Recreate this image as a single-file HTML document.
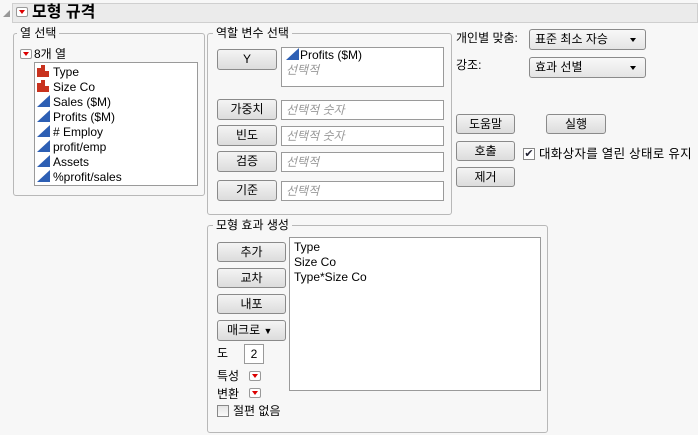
<!DOCTYPE html>
<html><head><meta charset="utf-8"><style>
*{box-sizing:border-box;margin:0;padding:0}
body{width:698px;height:435px;background:#f7f7f7;font-family:"Liberation Sans","Noto Sans CJK KR","NanumGothic",sans-serif;font-size:12px;color:#000;position:relative;overflow:hidden}
.a{position:absolute}
.grp{position:absolute;border:1px solid #b8b8b8;border-radius:3px}
.lbl{position:absolute;background:#f7f7f7;padding:0 3px;font-size:12px;line-height:14px}
.btn{position:absolute;border:1px solid #8a8a8a;border-radius:3px;background:linear-gradient(#f4f4f4,#dcdcdc);text-align:center;font-size:12px;line-height:18px}
.box{position:absolute;background:#fff;border:1px solid #9a9a9a}
.ph{color:#999;font-style:italic;padding-left:4px;line-height:18px}
.rb{position:absolute;width:12px;height:10px;border:1px solid #999;border-radius:2px;background:#fff}
.rb:after{content:"";position:absolute;left:2px;top:2px;border-left:3px solid transparent;border-right:3px solid transparent;border-top:4px solid #d00}
.it{height:15px;line-height:15px;padding-left:2px;white-space:nowrap}
.ic{display:inline-block;width:13px;height:12px;vertical-align:-1px;margin-right:3px}
.dd{position:absolute;border:1px solid #8a8a8a;border-radius:3px;background:linear-gradient(#f8f8f8,#e4e4e4);line-height:18px;padding-left:5px;font-size:12px}
.dd:after{content:"";position:absolute;right:9px;top:8px;border-left:3px solid transparent;border-right:3px solid transparent;border-top:4px solid #000}
</style></head><body>
<div class="a" style="left:3px;top:10px;width:0;height:0;border-left:7px solid transparent;border-bottom:7px solid #999"></div>
<div class="a" style="left:12px;top:3px;width:686px;height:20px;background:#ebebeb;border:1px solid #cfcfcf"></div>
<div class="rb" style="left:16px;top:7px"></div>
<div class="a" style="left:32px;top:3px;font-size:16px;font-weight:bold;line-height:19px">모형 규격</div>

<div class="grp" style="left:13px;top:33px;width:192px;height:163px"></div>
<div class="lbl" style="left:17px;top:26px">열 선택</div>
<div class="rb" style="left:20px;top:49px"></div>
<div class="a" style="left:34px;top:47px;line-height:14px">8개 열</div>
<div class="box" style="left:34px;top:62px;width:164px;height:124px;padding-top:2px">
<div class="it"><svg class="ic" viewBox="0 0 13 12"><path d="M0 3h4v9H0zM4 0h4v12H4zM8 6h4v6H8z" fill="#c8321e"/></svg>Type</div>
<div class="it"><svg class="ic" viewBox="0 0 13 12"><path d="M0 3h4v9H0zM4 0h4v12H4zM8 6h4v6H8z" fill="#c8321e"/></svg>Size Co</div>
<div class="it"><svg class="ic" viewBox="0 0 13 12"><path d="M0 12L13 0v12z" fill="#2d5fb4"/></svg>Sales ($M)</div>
<div class="it"><svg class="ic" viewBox="0 0 13 12"><path d="M0 12L13 0v12z" fill="#2d5fb4"/></svg>Profits ($M)</div>
<div class="it"><svg class="ic" viewBox="0 0 13 12"><path d="M0 12L13 0v12z" fill="#2d5fb4"/></svg># Employ</div>
<div class="it"><svg class="ic" viewBox="0 0 13 12"><path d="M0 12L13 0v12z" fill="#2d5fb4"/></svg>profit/emp</div>
<div class="it"><svg class="ic" viewBox="0 0 13 12"><path d="M0 12L13 0v12z" fill="#2d5fb4"/></svg>Assets</div>
<div class="it"><svg class="ic" viewBox="0 0 13 12"><path d="M0 12L13 0v12z" fill="#2d5fb4"/></svg>%profit/sales</div>
</div>

<div class="grp" style="left:207px;top:33px;width:245px;height:182px"></div>
<div class="lbl" style="left:213px;top:26px">역할 변수 선택</div>
<div class="btn" style="left:217px;top:49px;width:60px;height:21px">Y</div>
<div class="box" style="left:281px;top:47px;width:163px;height:40px">
<div class="it" style="padding-left:4px"><svg class="ic" viewBox="0 0 13 12" style="margin-right:1px"><path d="M0 12L13 0v12z" fill="#2d5fb4"/></svg>Profits ($M)</div>
<div class="ph" style="line-height:14px">선택적</div></div>
<div class="btn" style="left:217px;top:99px;width:60px;height:21px">가중치</div>
<div class="box ph" style="left:281px;top:100px;width:163px;height:20px">선택적 숫자</div>
<div class="btn" style="left:217px;top:125px;width:60px;height:21px">빈도</div>
<div class="box ph" style="left:281px;top:126px;width:163px;height:20px">선택적 숫자</div>
<div class="btn" style="left:217px;top:151px;width:60px;height:21px">검증</div>
<div class="box ph" style="left:281px;top:152px;width:163px;height:20px">선택적</div>
<div class="btn" style="left:217px;top:180px;width:60px;height:21px">기준</div>
<div class="box ph" style="left:281px;top:181px;width:163px;height:20px">선택적</div>

<div class="a" style="left:456px;top:31px;line-height:14px">개인별 맞춤:</div>
<div class="dd" style="left:529px;top:29px;width:117px;height:21px">표준 최소 자승</div>
<div class="a" style="left:456px;top:58px;line-height:14px">강조:</div>
<div class="dd" style="left:529px;top:57px;width:117px;height:21px">효과 선별</div>
<div class="btn" style="left:456px;top:114px;width:59px;height:20px">도움말</div>
<div class="btn" style="left:546px;top:114px;width:60px;height:20px">실행</div>
<div class="btn" style="left:456px;top:141px;width:59px;height:20px">호출</div>
<div class="a" style="left:523px;top:148px;width:12px;height:12px;border:1px solid #888;background:#fff;font-size:11px;line-height:10px;text-align:center;color:#223">✔</div>
<div class="a" style="left:539px;top:146px;line-height:16px;white-space:nowrap;font-size:12.5px;letter-spacing:0.3px">대화상자를 열린 상태로 유지</div>
<div class="btn" style="left:456px;top:167px;width:59px;height:20px">제거</div>

<div class="grp" style="left:207px;top:225px;width:341px;height:208px"></div>
<div class="lbl" style="left:213px;top:218px">모형 효과 생성</div>
<div class="btn" style="left:217px;top:242px;width:69px;height:20px">추가</div>
<div class="btn" style="left:217px;top:268px;width:69px;height:20px">교차</div>
<div class="btn" style="left:217px;top:294px;width:69px;height:20px">내포</div>
<div class="btn" style="left:217px;top:320px;width:69px;height:21px;text-align:left;padding-left:9px">매크로 <span style="font-size:9px">▼</span></div>
<div class="box" style="left:289px;top:237px;width:252px;height:154px;padding:2px 0 0 4px;line-height:15px">Type<br>Size Co<br>Type*Size Co</div>
<div class="a" style="left:217px;top:346px;line-height:14px">도</div>
<div class="box" style="left:244px;top:344px;width:20px;height:20px;text-align:center;line-height:18px">2</div>
<div class="a" style="left:217px;top:369px;line-height:14px">특성</div>
<div class="rb" style="left:249px;top:371px"></div>
<div class="a" style="left:217px;top:387px;line-height:14px">변환</div>
<div class="rb" style="left:249px;top:388px"></div>
<div class="a" style="left:217px;top:405px;width:12px;height:12px;border:1px solid #888;background:linear-gradient(#e4e4e4,#fafafa)"></div>
<div class="a" style="left:233px;top:404px;line-height:14px">절편 없음</div>
</body></html>
